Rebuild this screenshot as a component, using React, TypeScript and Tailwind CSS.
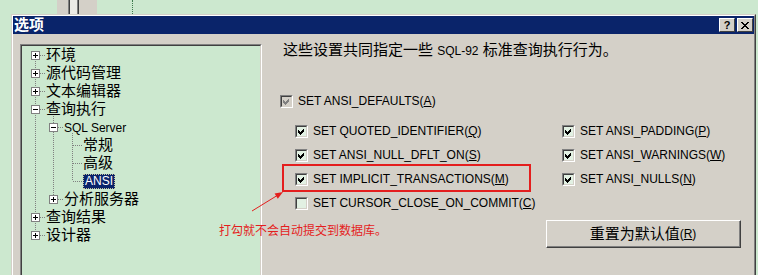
import React from "react";

const SANS = "font-['Liberation_Sans','Noto_Sans_CJK_SC',sans-serif]";

type TreeRow = {
  label: React.ReactNode;
  level: 1 | 2 | 3;
  selected?: boolean;
};

const treeRows: TreeRow[] = [
  { label: "环境", level: 1 },
  { label: "源代码管理", level: 1 },
  { label: "文本编辑器", level: 1 },
  { label: "查询执行", level: 1 },
  { label: <span className="text-[12px]">SQL Server</span>, level: 2 },
  { label: "常规", level: 3 },
  { label: "高级", level: 3 },
  { label: "ANSI", level: 3, selected: true },
  { label: "分析服务器", level: 2 },
  { label: "查询结果", level: 1 },
  { label: "设计器", level: 1 },
];

// expander boxes: [row, box left x, expanded]
const boxes: [number, number, boolean][] = [
  [0, 9, false],
  [1, 9, false],
  [2, 9, false],
  [3, 9, true],
  [4, 27, true],
  [8, 27, false],
  [9, 9, false],
  [10, 9, false],
];

const cy = (row: number) => 9 + row * 18;

function TreeLines() {
  const dot = { stroke: "#808080", strokeDasharray: "1 1", strokeWidth: 1 };
  return (
    <svg className="absolute left-0 top-0" width="238" height="220" shapeRendering="crispEdges">
      {/* level 1 */}
      <line x1="13.5" y1={cy(0)} x2="13.5" y2={cy(10)} {...dot} />
      {[0, 1, 2, 3, 9, 10].map((r) => (
        <line key={`h1-${r}`} x1="18" y1={cy(r) + 0.5} x2="23" y2={cy(r) + 0.5} {...dot} />
      ))}
      {/* level 2 */}
      <line x1="31.5" y1={cy(3) + 5} x2="31.5" y2={cy(8)} {...dot} />
      {[4, 8].map((r) => (
        <line key={`h2-${r}`} x1="36" y1={cy(r) + 0.5} x2="42" y2={cy(r) + 0.5} {...dot} />
      ))}
      {/* level 3 */}
      <line x1="50.5" y1={cy(4) + 6} x2="50.5" y2={cy(7)} {...dot} />
      {[5, 6, 7].map((r) => (
        <line key={`h3-${r}`} x1="51" y1={cy(r) + 0.5} x2="60" y2={cy(r) + 0.5} {...dot} />
      ))}
      {boxes.map(([r, x, open]) => {
        const c = cy(r);
        return (
          <g key={`b-${r}`}>
            <rect x={x + 0.5} y={c - 3.5} width="8" height="8" fill="#ffffff" stroke="#808080" />
            <line x1={x + 2} y1={c + 0.5} x2={x + 7} y2={c + 0.5} stroke="#000" />
            {!open && <line x1={x + 4.5} y1={c - 2} x2={x + 4.5} y2={c + 3} stroke="#000" />}
          </g>
        );
      })}
    </svg>
  );
}

function Tree() {
  return (
    <div className="ml-[7px] mt-[10px] h-[240px] w-[242px] shrink-0 border border-t-[#808080] border-l-[#808080] border-r-white border-b-white">
      <div className="relative h-full w-full border border-t-[#404040] border-l-[#404040] border-r-[#d4d0c8] border-b-[#d4d0c8] bg-[#cce8cf]">
        <TreeLines />
        <div className="relative flex flex-col text-[15px] text-black">
          {treeRows.map((row, i) => (
            <div
              key={i}
              className={`flex h-[18px] items-center leading-[18px] ${
                row.level === 1 ? "pl-[24px]" : row.level === 2 ? "pl-[42px]" : "pl-[61px]"
              }`}
            >
              {row.selected ? (
                <span className="flex h-[15px] items-center border border-dotted border-[#c8c8a0] bg-[#0a246a] px-[1px] text-[12px] text-white">
                  {row.label}
                </span>
              ) : (
                <span className="whitespace-nowrap">{row.label}</span>
              )}
            </div>
          ))}
        </div>
      </div>
    </div>
  );
}

function CheckBox({ checked, disabled }: { checked?: boolean; disabled?: boolean }) {
  return (
    <span className="flex h-[13px] w-[13px] shrink-0 border border-t-[#808080] border-l-[#808080] border-r-white border-b-white">
      <span
        className={`flex flex-1 items-center justify-center border border-t-[#404040] border-l-[#404040] border-r-[#d4d0c8] border-b-[#d4d0c8] ${
          disabled ? "bg-[#d4d0c8]" : "bg-[#e2f1e3]"
        }`}
      >
        {checked && (
          <svg width="9" height="9" viewBox="0 0 9 9" shapeRendering="crispEdges">
            <polygon points="1,3 3,5 7,1 7,4 3,8 1,6" fill={disabled ? "#808080" : "#000"} />
          </svg>
        )}
      </span>
    </span>
  );
}

function Option({
  text,
  hot,
  checked = true,
  disabled,
}: {
  text: string;
  hot: string;
  checked?: boolean;
  disabled?: boolean;
}) {
  return (
    <div className="flex h-[24px] items-center gap-[5px]">
      <CheckBox checked={checked} disabled={disabled} />
      <span className="whitespace-nowrap text-[12px] leading-[14px] text-black">
        {text}(<span className="underline">{hot}</span>)
      </span>
    </div>
  );
}

function TitleButton({ children }: { children: React.ReactNode }) {
  return (
    <span className="flex h-[14px] w-[16px] items-center justify-center border border-t-white border-l-white border-r-[#404040] border-b-[#404040] bg-[#d4d0c8]">
      {children}
    </span>
  );
}

export default function App() {
  return (
    <div className={`relative h-[275px] w-[758px] overflow-hidden bg-[#cce8cf] ${SANS}`}>
      {/* background window behind the dialog */}
      <div className="flex h-[14px]">
        <div className="w-[57px]" />
        <div className="flex w-[40px] bg-[#d4d0c8]">
          <div className="w-[11px]" />
          <div className="w-[1px] bg-[#808080]" />
          <div className="w-[1px] bg-[#404040]" />
          <div className="w-[7px] bg-[#ecebe6]" />
          <div className="w-[1px] bg-[#808080]" />
          <div className="w-[1px] bg-[#404040]" />
        </div>
        <div className="w-[35px]" />
        <div className="h-full border-l border-dotted border-[#3d7a4d]" />
      </div>

      {/* dialog */}
      <div className="ml-[11px] w-[745px] border border-t-[#d4d0c8] border-l-[#d4d0c8] border-r-[#404040] border-b-[#404040]">
        <div className="h-[270px] border border-t-white border-l-white border-r-[#808080] border-b-[#808080] bg-[#d4d0c8]">
          <div className="flex h-[18px] items-center justify-between bg-[#0a246a] pl-[1px] pr-[1px]">
            <span className="text-[15px] font-bold leading-[18px] text-white">选项</span>
            <div className="flex gap-[2px]">
              <TitleButton>
                <span className="text-[11px] font-bold leading-none text-black">?</span>
              </TitleButton>
              <TitleButton>
                <svg width="8" height="7" viewBox="0 0 8 7" shapeRendering="crispEdges">
                  <path d="M0.5 0 L7.5 7 M7.5 0 L0.5 7" stroke="#000" strokeWidth="1.6" />
                </svg>
              </TitleButton>
            </div>
          </div>

          <div className="flex">
            <Tree />

            <div className="flex flex-col pl-[18px]">
              <p className="ml-[3px] mt-[6px] text-[15px] leading-[20px] text-black">
                这些设置共同指定一些 <span className="text-[12px]">SQL-92</span> 标准查询执行行为。
              </p>

              <div className="mt-[28px]">
                <Option text="SET ANSI_DEFAULTS" hot="A" disabled />
              </div>

              <div className="mt-[6px] flex pl-[15px]">
                <div className="flex w-[267px] flex-col">
                  <Option text="SET QUOTED_IDENTIFIER" hot="Q" />
                  <Option text="SET ANSI_NULL_DFLT_ON" hot="S" />
                  <Option text="SET IMPLICIT_TRANSACTIONS" hot="M" />
                  <Option text="SET CURSOR_CLOSE_ON_COMMIT" hot="C" checked={false} />
                </div>
                <div className="flex flex-col">
                  <Option text="SET ANSI_PADDING" hot="P" />
                  <Option text="SET ANSI_WARNINGS" hot="W" />
                  <Option text="SET ANSI_NULLS" hot="N" />
                </div>
              </div>

              <button className="ml-[266px] mt-[5px] flex h-[28px] w-[195px] items-center justify-center border border-t-white border-l-white border-r-[#404040] border-b-[#404040] bg-[#d4d0c8]">
                <span className="flex h-full w-full items-center justify-center border-b border-r border-[#808080] text-[15px] leading-[18px] text-black">
                  重置为默认值<span className="text-[12px]">(<span className="underline">R</span>)</span>
                </span>
              </button>
            </div>
          </div>
        </div>
      </div>

      {/* annotation overlay */}
      <div className="absolute left-[282px] top-[164px] h-[28px] w-[249px] border-2 border-[#e41e1e]" />
      <svg className="absolute left-[248px] top-[186px]" width="40" height="30" viewBox="0 0 40 30">
        <line x1="4" y1="25" x2="30" y2="9" stroke="#e41e1e" strokeWidth="1" />
        <polygon points="35,6 29.8,12.8 26.6,7.6" fill="#e41e1e" />
      </svg>
      <div className="absolute left-[219px] top-[223px] whitespace-nowrap text-[12px] leading-[16px] text-[#e41e1e]">
        打勾就不会自动提交到数据库。
      </div>
    </div>
  );
}
